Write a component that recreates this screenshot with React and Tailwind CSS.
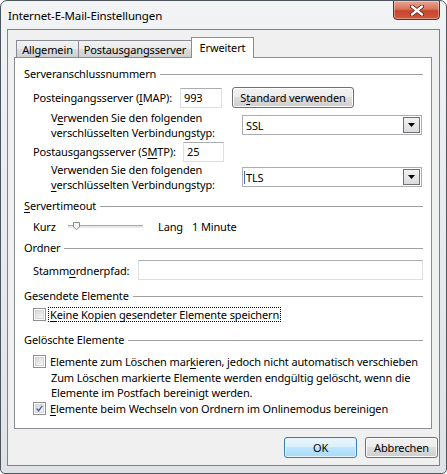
import React from "react";

const winBtn =
  "rounded-[3px] border border-[#707070] bg-[linear-gradient(#f2f2f2_0%,#ebebeb_50%,#dddddd_50%,#cfcfcf_100%)] shadow-[inset_0_0_0_1px_#fcfcfc] flex items-center justify-center";

const defaultBtn =
  "rounded-[3px] border border-[#3c7fb1] bg-[linear-gradient(#eaf6fd_0%,#d9f0fc_50%,#bee6fd_50%,#a7d9f5_100%)] shadow-[inset_0_0_0_1px_#e4f2fb] flex items-center justify-center";

const textBox =
  "h-[20px] bg-white border border-[#dbdfe6] border-t-[#abadb3] flex items-center pl-[3px]";

function Key({ children }) {
  return <u className="underline decoration-1 underline-offset-[2px]">{children}</u>;
}

function Section({ title, className = "" }) {
  return (
    <div className={"flex items-center h-[15px] pl-[9px] pr-[8px] " + className}>
      <span>{title}</span>
      <div className="flex-1 h-px bg-[#a0a0a0] ml-[4px] mt-px" />
    </div>
  );
}

function Combo({ value, caret }) {
  return (
    <div className="w-[180px] h-[20px] bg-white border border-[#abadb3] flex items-center">
      {caret && <div className="w-px h-[13px] bg-[#3b6fb6] ml-px" />}
      <span className={caret ? "pl-[1px]" : "pl-[3px]"}>{value}</span>
      <div className="ml-auto mr-px w-[17px] h-[16px] border border-[#707070] bg-[linear-gradient(#f2f2f2,#dcdcdc)] flex items-center justify-center">
        <svg width="7" height="4" viewBox="0 0 7 4">
          <path d="M0 0h7L3.5 4z" fill="#000" />
        </svg>
      </div>
    </div>
  );
}

function CheckBox({ checked }) {
  return (
    <div className="w-[13px] h-[13px] shrink-0 border border-[#8e8f8f] bg-white p-px">
      <div className="w-full h-full border border-[#d6d6d6] bg-[linear-gradient(135deg,#d8d8d8,#f7f7f7)] flex items-center justify-center">
        {checked && (
          <svg width="9" height="9" viewBox="0 0 9 9">
            <path d="M1 4.5l2.3 3L8 1" fill="none" stroke="#3f58a8" strokeWidth="1.6" />
          </svg>
        )}
      </div>
    </div>
  );
}

function Tab({ label, active, className = "" }) {
  if (active) {
    return (
      <div
        className={
          "h-[21px] bg-white border border-[#898c95] border-b-0 flex items-center justify-center pb-[2px] " +
          className
        }
      >
        {label}
      </div>
    );
  }
  return (
    <div
      className={
        "h-[17px] mb-px border border-[#898c95] border-b-0 bg-[linear-gradient(#f2f2f2_0%,#ebebeb_50%,#dddddd_50%,#cfcfcf_100%)] flex items-center justify-center " +
        className
      }
    >
      {label}
    </div>
  );
}

export default function App() {
  return (
    <div className="w-[447px] h-[474px] bg-white">
      <div className="w-[447px] h-[474px] border border-[#4f555c] rounded-t-[7px] rounded-b-[5px] bg-[linear-gradient(#f1f3f5,#dfe3e8)] flex flex-col font-['Noto_Sans',sans-serif] text-[11px] leading-[15px] tracking-[-0.13px] text-black overflow-hidden">
        {/* title bar */}
        <div className="h-[28px] flex shrink-0">
          <div className="pl-[7px] pt-[7px] text-[11.5px]">Internet-E-Mail-Einstellungen</div>
          <div className="ml-auto mr-[6px] -mt-px w-[47px] h-[20px] rounded-b-[4px] border border-[#6e2a20] bg-[linear-gradient(#e8a694_0%,#d9735c_45%,#c9432b_55%,#cf5b3f_100%)] shadow-[inset_0_0_0_1px_rgba(255,255,255,0.35)] flex items-center justify-center">
            <svg width="14" height="11" viewBox="0 0 14 11">
              <path d="M2 1.5l10 8M12 1.5l-10 8" stroke="#5a1a10" strokeWidth="4" strokeLinecap="round" />
              <path d="M2 1.5l10 8M12 1.5l-10 8" stroke="#fff" strokeWidth="2.4" strokeLinecap="round" />
            </svg>
          </div>
        </div>

        {/* client area */}
        <div className="ml-[6px] w-[433px] h-[437px] shrink-0 bg-[#f0f0f0] border border-[#7c828a] flex flex-col pl-[6px]">
          <div className="mt-[7px] h-[21px] -mb-px flex items-end pl-[2px] relative z-10">
            <Tab label="Allgemein" className="w-[63px]" />
            <Tab label="Postausgangsserver" className="w-[114px] -ml-px" />
            <Tab label="Erweitert" active className="w-[63px] -ml-px" />
          </div>

          <div className="w-[418px] h-[372px] bg-white border border-[#898c95] flex flex-col">
            <Section title="Serveranschlussnummern" className="mt-[8px]" />

            <div className="mt-[6px] h-[21px] flex items-center pl-[18px]">
              <div className="w-[147px]">
                Posteingangsserver (<Key>I</Key>MAP):
              </div>
              <div className={textBox + " w-[42px]"}>993</div>
              <div className={winBtn + " ml-[10px] w-[122px] h-[21px]"}>
                <span>
                  S<Key>t</Key>andard verwenden
                </span>
              </div>
            </div>

            <div className="mt-[2px] h-[30px] flex items-center pl-[36px]">
              <div className="w-[191px]">
                V<Key>e</Key>rwenden Sie den folgenden
                <br />
                verschlüsselten Verbindungstyp:
              </div>
              <Combo value="SSL" />
            </div>

            <div className="mt-px h-[21px] flex items-center pl-[18px]">
              <div className="w-[150px]">
                Postausgangsserver (S<Key>M</Key>TP):
              </div>
              <div className={textBox + " w-[41px]"}>25</div>
            </div>

            <div className="h-[30px] flex items-center pl-[36px]">
              <div className="w-[191px]">
                Verwenden Sie den folgenden
                <br />
                <Key>v</Key>erschlüsselten Verbindungstyp:
              </div>
              <Combo value="TLS" caret />
            </div>

            <Section
              title={
                <>
                  <Key>S</Key>ervertimeout
                </>
              }
              className="mt-[6px]"
            />

            <div className="mt-[5px] h-[16px] flex items-center pl-[18px]">
              <div className="w-[35px]">Kurz</div>
              <div className="relative w-[75px] h-[3px] border-t border-[#a8a8a8] bg-[#e6e9ea]">
                <svg className="absolute left-[5px] -top-[4px]" width="7" height="8" viewBox="0 0 7 8">
                  <path d="M0.5 0.5h6v4.5l-3 2.5-3-2.5z" fill="#f4f4f4" stroke="#8a8a8a" />
                </svg>
              </div>
              <div className="ml-[15px] w-[34px]">Lang</div>
              <div>1 Minute</div>
            </div>

            <Section title="Ordner" className="mt-[6px]" />

            <div className="mt-[5px] h-[20px] flex items-center pl-[18px]">
              <div className="w-[105px]">
                Stamm<Key>o</Key>rdnerpfad:
              </div>
              <div className={textBox + " w-[285px]"} />
            </div>

            <Section title="Gesendete Elemente" className="mt-[8px]" />

            <div className="mt-[4px] h-[15px] flex items-center pl-[18px]">
              <CheckBox />
              <div className="ml-[2px] border border-dotted border-black pl-px pr-px leading-[13px]">
                <Key>K</Key>eine Kopien gesendeter Elemente speichern
              </div>
            </div>

            <Section title="Gelöschte Elemente" className="mt-[10px]" />

            <div className="mt-[7px] h-[15px] flex items-center pl-[18px]">
              <CheckBox />
              <div className="ml-[4px]">
                Elemente zum Löschen mar<Key>k</Key>ieren, jedoch nicht automatisch verschieben
              </div>
            </div>

            <div className="mt-px h-[30px] pl-[36px]">
              Zum Löschen markierte Elemente werden endgültig gelöscht, wenn die
              <br />
              Elemente im Postfach bereinigt werden.
            </div>

            <div className="mt-px h-[15px] flex items-center pl-[18px]">
              <CheckBox checked />
              <div className="ml-[4px]">
                <Key>E</Key>lemente beim Wechseln von Ordnern im Onlinemodus bereinigen
              </div>
            </div>
          </div>

          <div className="mt-[8px] flex pl-[270px] gap-[8px]">
            <div className={defaultBtn + " w-[73px] h-[21px]"}>OK</div>
            <div className={winBtn + " w-[73px] h-[21px]"}>Abbrechen</div>
          </div>
        </div>
      </div>
    </div>
  );
}
